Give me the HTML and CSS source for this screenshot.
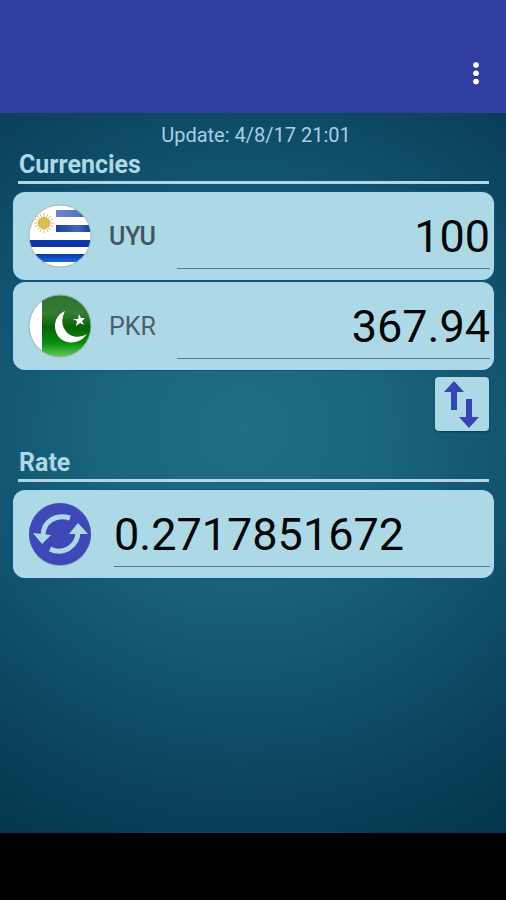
FILE: index.html
```html
<!DOCTYPE html>
<html lang="en">
<head>
<meta charset="utf-8">
<meta name="viewport" content="width=device-width, initial-scale=1">
<title>Currency converter</title>
<link rel="stylesheet" href="styles.css">
</head>
<body>
<header class="app-bar">
  <button class="menu-button" type="button" aria-label="More options">
    <svg width="8" height="24" viewBox="0 0 8 24" fill="#fff" stroke="#1c1f96" stroke-width="1"><circle cx="4" cy="4" r="3.5"/><circle cx="4" cy="12.3" r="3.5"/><circle cx="4" cy="20.6" r="3.5"/></svg>
  </button>
</header>
<main class="content">
  <p class="update">Update: 4/8/17 21:01</p>
  <section class="section">
    <h2 class="heading">Currencies</h2>
    <div class="card">
      <svg class="badge" viewBox="0 0 64 64" aria-hidden="true">
        <defs>
          <clipPath id="disc"><circle cx="32" cy="32" r="31"/></clipPath>
          <linearGradient id="blue" x1="0" y1="0" x2="0" y2="1"><stop offset="0" stop-color="#0c3aa2"/><stop offset="1" stop-color="#1568e4"/></linearGradient>
          <linearGradient id="pale" x1="0" y1="0" x2="1" y2="0"><stop offset="0" stop-color="#7088c8"/><stop offset=".65" stop-color="#5472bf"/><stop offset="1" stop-color="#0c3aa0"/></linearGradient>
          <linearGradient id="mid" x1="0" y1="0" x2="1" y2="0"><stop offset="0" stop-color="#173fa5"/><stop offset=".6" stop-color="#4467ba"/><stop offset="1" stop-color="#0c3aa0"/></linearGradient>
        </defs>
        <g clip-path="url(#disc)">
          <path fill="#fff" d="M0 0h64v64H0z"/>
          <path fill="url(#pale)" d="M28 6h36v7H28z"/>
          <path fill="url(#mid)" d="M28 21h36v7H28z"/>
          <path fill="#0937a5" d="M0 36h64v7H0z"/>
          <path fill="url(#blue)" d="M0 50h64v8H0z"/>
          <g stroke="#dcc274" stroke-width="1"><path d="M16 9v20M6 19h20M9 12l14 14M23 12L9 26M12 10l8 18M20 10l-8 18M7 15l18 8M7 23l18-8"/></g>
          <circle cx="16" cy="19" r="5.5" fill="#e0bd50" stroke="#cfae53"/>
        </g>
        <circle cx="32" cy="32" r="31" fill="none" stroke="#a9b7bd" stroke-width="1"/>
      </svg>
      <label class="code code-active" for="from">UYU</label>
      <input class="amount" id="from" type="text" inputmode="decimal" value="100">
    </div>
    <div class="card">
      <svg class="badge" viewBox="0 0 64 64" aria-hidden="true">
        <defs>
          <linearGradient id="green" x1="0" y1="0" x2="0" y2="1"><stop offset="0" stop-color="#2e742d"/><stop offset=".3" stop-color="#367b35"/><stop offset=".52" stop-color="#056307"/><stop offset=".76" stop-color="#088c0b"/><stop offset="1" stop-color="#6bd063"/></linearGradient>
        </defs>
        <g clip-path="url(#disc)">
          <path fill="#fff" d="M0 0h14v64H0z"/>
          <path fill="url(#green)" d="M14 0h50v64H14z"/>
          <path fill="#fff" d="M37 17C29 20 25 29 28 38c4 12 22 15 31 2-8 5-18 3-22-4-4-6-3-13 0-19z"/>
          <path fill="#fff" d="M51 20l2 4 4 0-3 3 2 4-4-2-4 3 1-5-4-2h5z"/>
        </g>
        <circle cx="32" cy="32" r="31" fill="none" stroke="#9aaeae" stroke-width="1"/>
      </svg>
      <label class="code" for="to">PKR</label>
      <input class="amount" id="to" type="text" inputmode="decimal" value="367.94">
    </div>
    <button class="swap" type="button" aria-label="Swap currencies">
      <svg width="54" height="54" viewBox="0 0 54 54" fill="#3744b5"><path d="M19 4l10 11h-7v18h-6V15H9zM31 22h6v18h7L34 51 24 40h7z"/></svg>
    </button>
  </section>
  <section class="section">
    <h2 class="heading">Rate</h2>
    <div class="card">
      <button class="refresh" type="button" aria-label="Refresh rate">
        <svg class="badge" viewBox="0 0 64 64">
          <circle cx="32" cy="33" r="31" fill="#65829f" opacity=".6"/>
          <circle cx="32" cy="32" r="31" fill="#3e49b7"/>
          <g fill="none" stroke="#add8e6" stroke-width="5"><path d="M42 16C28 12 15 19 15 34"/><path d="M22 47C36 54 50 43 50 30"/></g>
          <path fill="#add8e6" d="M5 31l18 2-9 9zM41 32l9-11 10 11z"/>
        </svg>
      </button>
      <input class="amount amount-rate" type="text" inputmode="decimal" aria-label="Rate" value="0.2717851672">
    </div>
  </section>
</main>
<footer class="nav-bar"></footer>
</body>
</html>
```
FILE: styles.css
```css
* {
  box-sizing: border-box;
}

body {
  margin: 0;
  min-height: 100vh;
  display: flex;
  flex-direction: column;
  background: #000;
  font-family: Roboto, sans-serif;
}

button {
  padding: 0;
  border: 0;
  background: none;
  cursor: pointer;
}

svg {
  display: block;
}

.app-bar {
  display: flex;
  justify-content: flex-end;
  align-items: flex-end;
  height: 113px;
  padding: 0 18px 28px;
  background: #303f9f;
}

.menu-button {
  padding: 0 8px;
}

.content {
  flex: 1;
  padding: 8px 12px;
  background: radial-gradient(ellipse 105% 70% at 48% 44%, #206d86 0%, #1b667f 25%, #125470 50%, #0a415b 75%, #053850 90%, #03314a 100%);
}

.update {
  margin: 0;
  padding-left: 6px;
  color: #a6cfe4;
  font-size: 20px;
  line-height: 28px;
  text-align: center;
}

.section {
  display: flex;
  flex-direction: column;
  gap: 2px;
}

.section + .section {
  margin-top: 16px;
}

.heading {
  margin: 0 5px 6px 6px;
  padding-left: 1px;
  border-bottom: 3px solid #add8e6;
  color: #add8e6;
  font-size: 25px;
  font-weight: 700;
  line-height: 32px;
}

.card {
  display: flex;
  align-items: center;
  height: 88px;
  margin-left: 1px;
  padding: 0 4px 0 15px;
  border-radius: 12px;
  background: #add8e6;
  box-shadow: 0 0 1px 1px #0f568b;
}

.badge {
  flex: none;
  width: 64px;
  height: 64px;
}

.code {
  width: 68px;
  margin-left: 17px;
  color: #4c606b;
  font-size: 25px;
}

.code-active {
  color: #43545f;
  font-weight: 500;
}

.amount {
  flex: 1;
  min-width: 0;
  height: 66px;
  padding: 2px 0 0;
  border: 0;
  border-bottom: 1px solid #60798a;
  border-radius: 0;
  outline: 0;
  background: none;
  color: #040707;
  font: 45px Roboto, sans-serif;
  text-align: right;
}

.amount-rate {
  margin-left: 22px;
  text-align: left;
}

.swap {
  align-self: flex-end;
  margin: 5px 5px 0 0;
  border-radius: 4px;
  background: #add8e6;
  box-shadow: 0 1px 2px #043f57;
}

.nav-bar {
  height: 67px;
  background: #000;
}
```
